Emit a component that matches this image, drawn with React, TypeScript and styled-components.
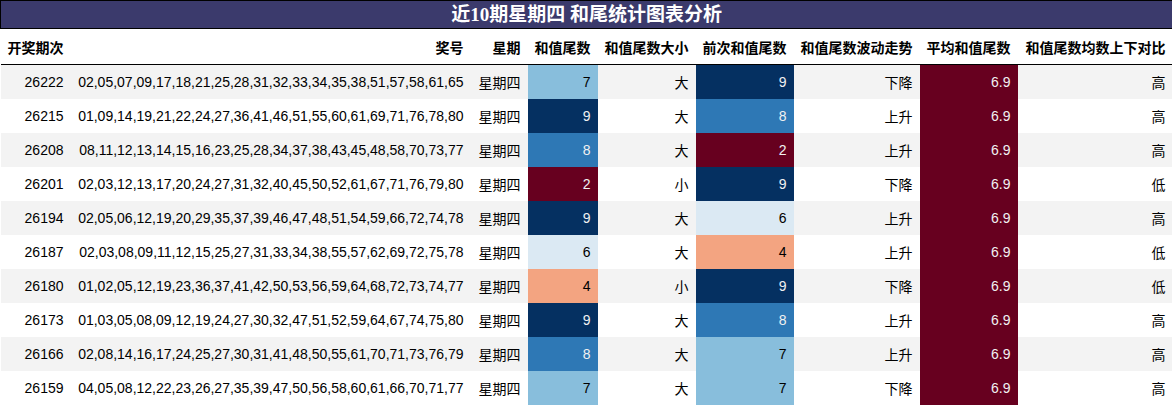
import React from "react";
import styled, { createGlobalStyle } from "styled-components";

const Global = createGlobalStyle`
  html, body { margin: 0; padding: 0; background: #ffffff; }
  body { font-family: "Liberation Sans", "Noto Sans CJK SC", sans-serif; }
`;

const Table = styled.table`
  width: 1172px;
  border-collapse: collapse;
  table-layout: fixed;
  font-family: "Liberation Sans", "Noto Sans CJK SC", sans-serif;
  font-size: 14px;
  color: #000;
`;

const TitleCell = styled.th`
  height: 27px;
  padding: 0;
  background: #3b3a6c;
  border: 1px solid #000;
  color: #ffffff;
  font-family: "Liberation Serif", "Noto Sans CJK SC", serif;
  font-size: 19px;
  font-weight: bold;
  text-align: center;
  vertical-align: middle;
  line-height: 27px;
`;

const HeadRow = styled.tr`
  border-bottom: 1px solid #000;
`;

const HeadCell = styled.th`
  height: 35px;
  padding: 0 7px 0 0;
  font-weight: bold;
  text-align: right;
  white-space: nowrap;
  vertical-align: middle;
`;

const Row = styled.tr<{ $odd: boolean }>`
  background: ${(p) => (p.$odd ? "#f3f3f3" : "#ffffff")};
`;

const Cell = styled.td<{ $bg?: string; $fg?: string }>`
  height: 34px;
  padding: 0 7px 0 0;
  text-align: right;
  white-space: nowrap;
  vertical-align: middle;
  background: ${(p) => p.$bg ?? "transparent"};
  color: ${(p) => p.$fg ?? "#000"};
`;

const cmap: Record<string, [string, string]> = {
  "9": ["#053061", "#f1f1f1"],
  "8": ["#2e78b5", "#f1f1f1"],
  "7": ["#88bedc", "#000000"],
  "6": ["#dbe9f3", "#000000"],
  "4": ["#f3a481", "#000000"],
  "2": ["#67001f", "#f1f1f1"],
  "6.9": ["#67001f", "#f1f1f1"],
};

const widths = [70, 400, 57, 70, 98, 98, 126, 98, 155];
const headers = [
  "开奖期次",
  "奖号",
  "星期",
  "和值尾数",
  "和值尾数大小",
  "前次和值尾数",
  "和值尾数波动走势",
  "平均和值尾数",
  "和值尾数均数上下对比",
];

type R = [string, string, string, string, string, string, string];
const data: R[] = [
  ["26222", "02,05,07,09,17,18,21,25,28,31,32,33,34,35,38,51,57,58,61,65", "7", "大", "9", "下降", "高"],
  ["26215", "01,09,14,19,21,22,24,27,36,41,46,51,55,60,61,69,71,76,78,80", "9", "大", "8", "上升", "高"],
  ["26208", "08,11,12,13,14,15,16,23,25,28,34,37,38,43,45,48,58,70,73,77", "8", "大", "2", "上升", "高"],
  ["26201", "02,03,12,13,17,20,24,27,31,32,40,45,50,52,61,67,71,76,79,80", "2", "小", "9", "下降", "低"],
  ["26194", "02,05,06,12,19,20,29,35,37,39,46,47,48,51,54,59,66,72,74,78", "9", "大", "6", "上升", "高"],
  ["26187", "02,03,08,09,11,12,15,25,27,31,33,34,38,55,57,62,69,72,75,78", "6", "大", "4", "上升", "低"],
  ["26180", "01,02,05,12,19,23,36,37,41,42,50,53,56,59,64,68,72,73,74,77", "4", "小", "9", "下降", "低"],
  ["26173", "01,03,05,08,09,12,19,24,27,30,32,47,51,52,59,64,67,74,75,80", "9", "大", "8", "上升", "高"],
  ["26166", "02,08,14,16,17,24,25,27,30,31,41,48,50,55,61,70,71,73,76,79", "8", "大", "7", "上升", "高"],
  ["26159", "04,05,08,12,22,23,26,27,35,39,47,50,56,58,60,61,66,70,71,77", "7", "大", "7", "下降", "高"],
];

const Colored: React.FC<{ v: string }> = ({ v }) => {
  const [bg, fg] = cmap[v];
  return (
    <Cell $bg={bg} $fg={fg}>
      {v}
    </Cell>
  );
};

export default function App() {
  return (
    <>
      <Global />
      <Table>
        <colgroup>
          {widths.map((w, i) => (
            <col key={i} style={{ width: w }} />
          ))}
        </colgroup>
        <thead>
          <tr>
            <TitleCell colSpan={9}>近10期星期四 和尾统计图表分析</TitleCell>
          </tr>
          <HeadRow>
            {headers.map((h) => (
              <HeadCell key={h}>{h}</HeadCell>
            ))}
          </HeadRow>
        </thead>
        <tbody>
          {data.map((r, i) => (
            <Row key={r[0]} $odd={i % 2 === 0}>
              <Cell>{r[0]}</Cell>
              <Cell>{r[1]}</Cell>
              <Cell>星期四</Cell>
              <Colored v={r[2]} />
              <Cell>{r[3]}</Cell>
              <Colored v={r[4]} />
              <Cell>{r[5]}</Cell>
              <Colored v="6.9" />
              <Cell>{r[6]}</Cell>
            </Row>
          ))}
        </tbody>
      </Table>
    </>
  );
}
